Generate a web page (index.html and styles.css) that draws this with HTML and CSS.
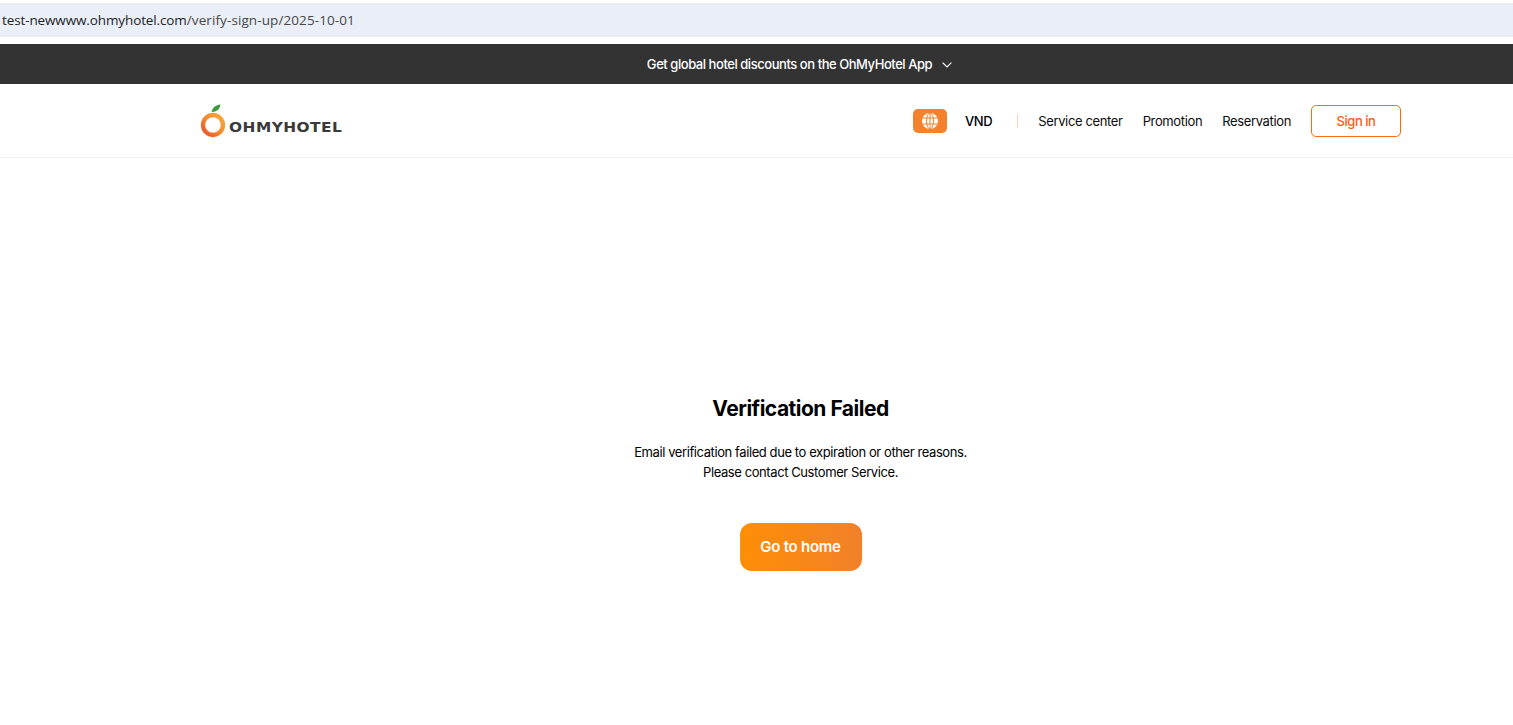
FILE: index.html
```html
<!DOCTYPE html>
<html lang="en">
<head>
<meta charset="utf-8">
<title>Verification Failed</title>
<link rel="stylesheet" href="styles.css">
</head>
<body>
<div class="urlbar"><span class="url-host">test-newwww.ohmyhotel.com</span><span class="url-path">/verify-sign-up/2025-10-01</span></div>
<div class="banner">
  <span class="banner-text">Get global hotel discounts on the OhMyHotel App</span>
  <svg class="chevron" width="10" height="6" viewBox="0 0 10 6"><path d="M.6.6 5 5l4.400-4.400" fill="none" stroke="#fff" stroke-width="1.200"/></svg>
</div>
<header class="header">
  <div class="header-inner">
    <a class="logo">
      <svg class="logo-mark" width="26" height="34" viewBox="0 0 26 34">
        <defs><linearGradient id="ring" x1="0" y1="1" x2="1" y2="0"><stop offset="0" stop-color="#e8502f"/><stop offset=".5" stop-color="#f28a2c"/><stop offset="1" stop-color="#f8ab3c"/></linearGradient></defs>
        <circle cx="13" cy="21" r="10" fill="none" stroke="url(#ring)" stroke-width="4.300"/>
        <path d="M11.500 8C12.500 3.500 15.500 1 20.500 .5 20 5 17 8 11.500 8Z" fill="#3f9a3c"/>
      </svg>
      <span class="logo-text">OHMYHOTEL</span>
    </a>
    <nav class="nav">
      <span class="globe-btn">
        <svg width="16" height="16" viewBox="0 0 16 16" fill="none"><circle cx="8" cy="8" r="8" fill="#fff"/><ellipse cx="8" cy="8" rx="3.500" ry="8" stroke="#f4812c"/><path d="M0 5h16M0 11h16M8 0v16" stroke="#f4812c"/></svg>
      </span>
      <span class="currency">VND</span>
      <span class="divider"></span>
      <a class="nav-link">Service center</a>
      <a class="nav-link">Promotion</a>
      <a class="nav-link">Reservation</a>
      <a class="signin">Sign in</a>
    </nav>
  </div>
</header>
<main class="main">
  <h1 class="title">Verification Failed</h1>
  <p class="message">Email verification failed due to expiration or other reasons.<br>Please contact Customer Service.</p>
  <a class="home-btn">Go to home</a>
</main>
</body>
</html>
```
FILE: styles.css
```css
* { box-sizing: border-box; }
html, body { margin: 0; height: 100%; overflow: hidden; }
body { background: #fff; font-family: Inter, "Liberation Sans", sans-serif; color: #000; padding-top: 3px; }
.urlbar { height: 34px; background: #e9eef7; padding-left: 2px; display: flex; align-items: center; font-family: "Open Sans", "Noto Sans", sans-serif; font-size: 13.500px; white-space: nowrap; }
.url-host { color: #1f1f1f; letter-spacing: -.12px; }
.url-path { color: #474747; letter-spacing: .1px; }
.banner { margin-top: 7px; height: 40px; background: #333; color: #fff; display: flex; align-items: center; justify-content: center; gap: 10px; padding-left: 86px; font-size: 13px; font-weight: 500; letter-spacing: -.45px; }
.chevron { display: block; margin-top: 2px; }
.header { height: 74px; border-bottom: 1px solid #eee; padding-left: 200px; }
.header-inner { width: 1201px; height: 73px; display: flex; align-items: center; justify-content: space-between; }
.logo { display: flex; align-items: flex-end; height: 34px; margin-top: 1px; }
.logo-mark { display: block; }
.logo-text { font-family: "DejaVu Sans", sans-serif; font-weight: 700; font-size: 13.500px; line-height: 12px; color: #3a3a3a; letter-spacing: .4px; margin-left: 3px; margin-bottom: 5px; transform: scaleX(1.14); transform-origin: left center; width: 116px; white-space: nowrap; }
.nav { display: flex; align-items: center; font-size: 13px; letter-spacing: -.36px; }
.globe-btn { width: 34px; height: 24px; background: #f4812c; border-radius: 5px; display: flex; align-items: center; justify-content: center; }
.currency { margin-left: 18px; font-weight: 500; }
.divider { width: 1px; height: 14px; background: #f9d5c0; margin: 0 20px 0 25px; }
.nav-link { margin-right: 20px; color: #0b0b0b; }
.signin { width: 90px; height: 32px; border: 1px solid #ff6a13; border-radius: 5px; color: #ff5a10; font-weight: 500; letter-spacing: -.45px; display: flex; align-items: center; justify-content: center; }
.main { display: flex; flex-direction: column; align-items: center; padding: 237px 0 0 88px; }
.title { margin: 0; font-size: 21px; line-height: 27px; font-weight: 700; letter-spacing: -.5px; }
.message { margin: 20px 0 0; text-align: center; font-size: 13px; line-height: 20px; letter-spacing: -.41px; }
.home-btn { margin-top: 41px; padding-bottom: 2px; width: 122px; height: 48px; border-radius: 12px; background: linear-gradient(90deg, #ff8e06, #f18129); color: #fff; font-size: 15px; font-weight: 600; letter-spacing: -.25px; display: flex; align-items: center; justify-content: center; }
```
